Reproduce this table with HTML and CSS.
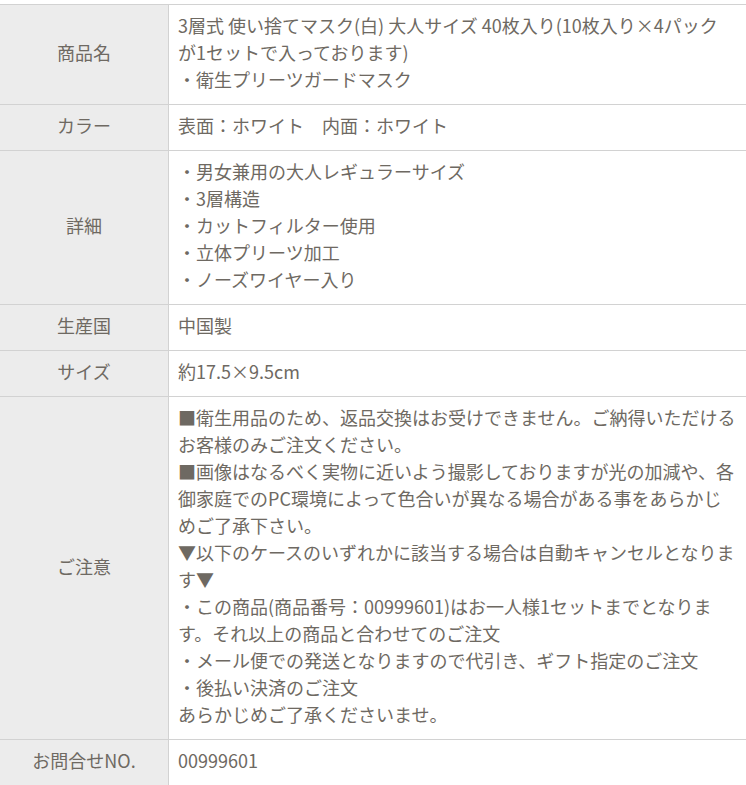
FILE: index.html
```html
<!DOCTYPE html>
<html lang="ja">
<head>
  <meta charset="UTF-8" />
  <meta name="viewport" content="width=device-width, initial-scale=1.0"/>
  <title>商品詳細</title>
  <link rel="stylesheet" href="styles.css">
</head>
<body>
  <table class="spec-table">
    <tr>
      <th>商品名</th>
      <td>3層式 使い捨てマスク(白) 大人サイズ 40枚入り(10枚入り×4パック<br>が1セットで入っております)<br>・衛生プリーツガードマスク</td>
    </tr>
    <tr>
      <th>カラー</th>
      <td>表面：ホワイト　内面：ホワイト</td>
    </tr>
    <tr>
      <th>詳細</th>
      <td>・男女兼用の大人レギュラーサイズ<br>・3層構造<br>・カットフィルター使用<br>・立体プリーツ加工<br>・ノーズワイヤー入り</td>
    </tr>
    <tr>
      <th>生産国</th>
      <td>中国製</td>
    </tr>
    <tr>
      <th>サイズ</th>
      <td>約17.5×9.5cm</td>
    </tr>
    <tr>
      <th>ご注意</th>
      <td>
        ■衛生用品のため、返品交換はお受けできません。ご納得いただける<br>お客様のみご注文ください。<br>
        ■画像はなるべく実物に近いよう撮影しておりますが光の加減や、各<br>御家庭でのPC環境によって色合いが異なる場合がある事をあらかじ<br>めご了承下さい。<br>
        ▼以下のケースのいずれかに該当する場合は自動キャンセルとなりま<br>す▼<br>
        ・この商品(商品番号：00999601)はお一人様1セットまでとなりま<br>す。それ以上の商品と合わせてのご注文<br>
        ・メール便での発送となりますので代引き、ギフト指定のご注文<br>
        ・後払い決済のご注文<br>
        あらかじめご了承くださいませ。
      </td>
    </tr>
    <tr>
      <th>お問合せNO.</th>
      <td>00999601</td>
    </tr>
  </table>
</body>
</html>
```

FILE: styles.css
```css
body {
  margin: 0;
  background: #fff;
  font-family: "Noto Sans CJK JP", "Noto Sans", sans-serif;
  color: #6e6962;
}

.spec-table {
  width: 100%;
  margin-top: 4px;
  border-collapse: collapse;
  table-layout: fixed;
  font-size: 18px;
  line-height: 27px;
}

.spec-table th,
.spec-table td {
  border-top: 1px solid #d2d2d2;
  border-bottom: 1px solid #d2d2d2;
  padding: 7px 4px 11px 9px;
  vertical-align: middle;
  text-align: left;
  white-space: nowrap;
}

.spec-table th {
  width: 168px;
  padding: 7px 0 11px;
  font-weight: normal;
  text-align: center;
  background: #ececec;
  border-right: 1px solid #d2d2d2;
}
```
